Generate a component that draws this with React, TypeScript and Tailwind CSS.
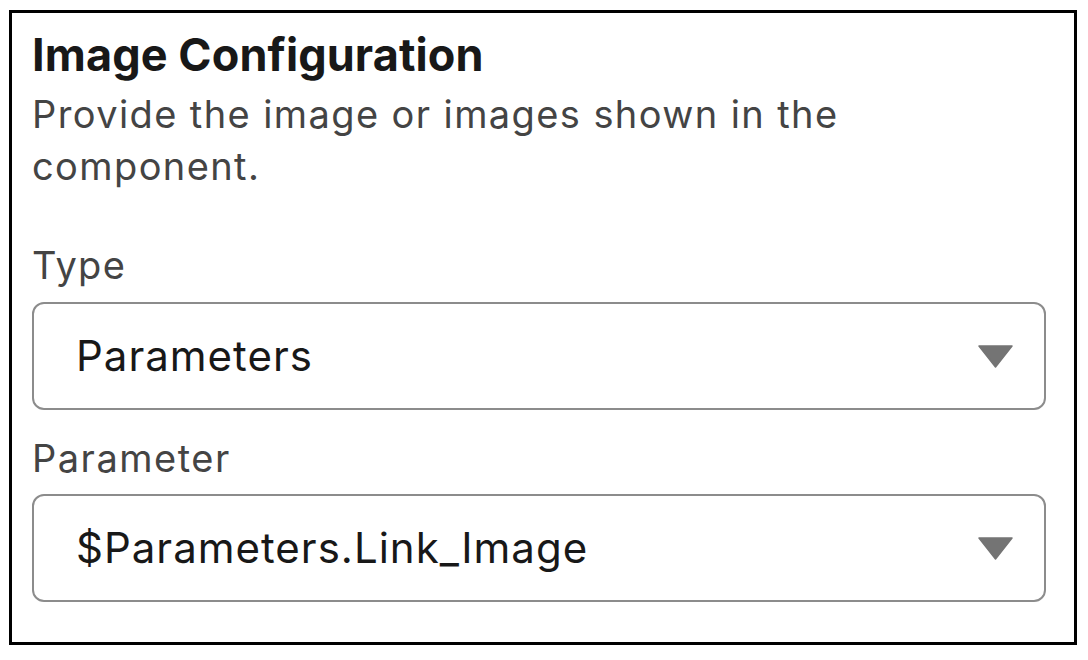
import React from "react";

function Caret() {
  return (
    <svg width="35" height="23" viewBox="0 0 35 23" className="shrink-0">
      <path d="M1 1 L34 1 L17.5 22 Z" fill="#747474" stroke="#747474" strokeWidth="1.5" strokeLinejoin="round" />
    </svg>
  );
}

function Select({ value }: { value: string }) {
  return (
    <div className="flex h-[108px] items-center justify-between rounded-[12px] border-[2.5px] border-[#8c8c8c] pl-[42px] pr-[31px]">
      <span className="text-[42px] leading-[52px] tracking-[1px] text-[#181818]">{value}</span>
      <Caret />
    </div>
  );
}

export default function App() {
  return (
    <div
      className="h-[660px] w-[1088px] bg-white pl-[9px] pt-[10px]"
      style={{ fontFamily: "Inter, 'Noto Sans', sans-serif" }}
    >
      <div className="flex h-[635px] w-[1068px] flex-col border-[3px] border-black pl-[20px] pr-[28px] pt-[16px]">
        <h1 className="text-[45px] font-bold leading-[52px] tracking-[0.1px] text-[#181818]">
          Image Configuration
        </h1>
        <p className="mt-[7px] w-[880px] text-[38px] leading-[52px] tracking-[1.4px] text-[#444444]">
          Provide the image or images shown in the component.
        </p>
        <div className="mt-[47px] text-[38px] leading-[52px] tracking-[1.3px] text-[#444444]">Type</div>
        <div className="mt-[11px]">
          <Select value="Parameters" />
        </div>
        <div className="mt-[22px] text-[38px] leading-[52px] tracking-[1.5px] text-[#444444]">Parameter</div>
        <div className="mt-[10px]">
          <Select value="$Parameters.Link_Image" />
        </div>
      </div>
    </div>
  );
}
